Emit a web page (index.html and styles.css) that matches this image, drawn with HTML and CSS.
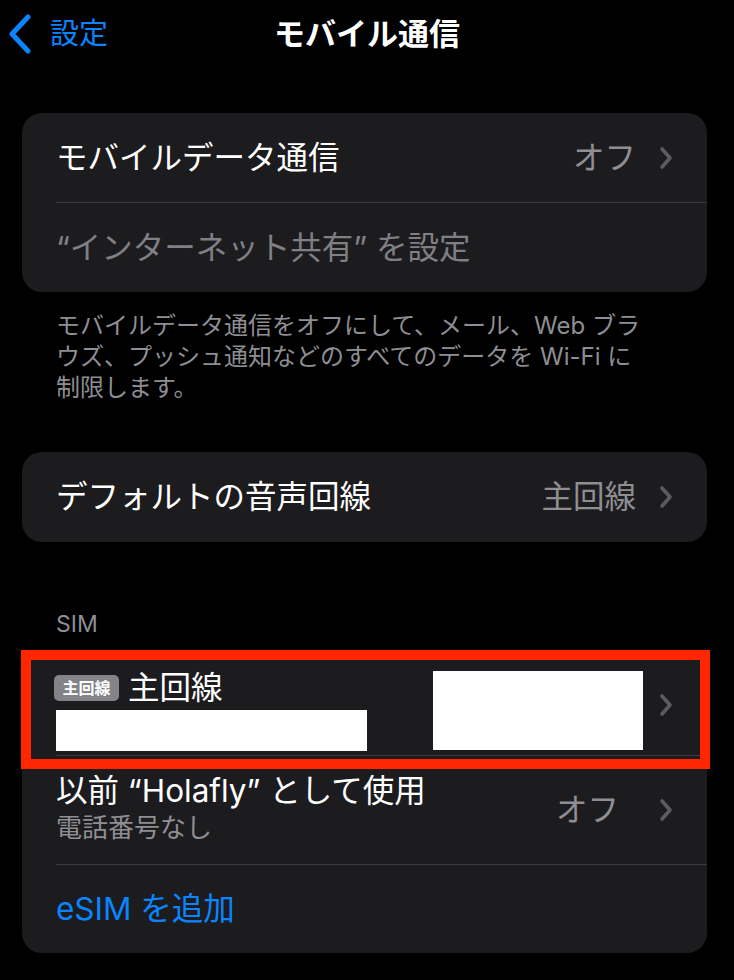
FILE: index.html
```html
<!DOCTYPE html>
<html lang="ja">
<head>
<meta charset="utf-8">
<title>モバイル通信</title>
<link rel="stylesheet" href="styles.css">
</head>
<body>
<header class="nav">
  <a class="nav-back" href="#">
    <svg class="nav-back-icon" viewBox="0 0 24 40" width="24" height="40" aria-hidden="true">
      <path d="M20 3 L4 20 L20 37" fill="none" stroke="currentColor" stroke-width="5" stroke-linecap="round" stroke-linejoin="round"/>
    </svg>
    <span>設定</span>
  </a>
  <h1 class="nav-title">モバイル通信</h1>
  <div></div>
</header>

<main class="content">
  <section class="group group-first">
    <div class="row">
      <span class="row-label">モバイルデータ通信</span>
      <span class="row-value">オフ</span>
      <svg class="chevron" viewBox="0 0 14 24" width="14" height="24" aria-hidden="true"><path d="M3 3 L11 12 L3 21"/></svg>
    </div>
    <div class="row">
      <span class="row-label muted">“インターネット共有” を設定</span>
    </div>
  </section>
  <p class="group-footer">モバイルデータ通信をオフにして、メール、Web ブラ<br>ウズ、プッシュ通知などのすべてのデータを Wi-Fi に<br>制限します。</p>

  <section class="group group-voice">
    <div class="row">
      <span class="row-label">デフォルトの音声回線</span>
      <span class="row-value">主回線</span>
      <svg class="chevron" viewBox="0 0 14 24" width="14" height="24" aria-hidden="true"><path d="M3 3 L11 12 L3 21"/></svg>
    </div>
  </section>

  <h2 class="group-header">SIM</h2>
  <section class="group group-sim">
    <div class="row sim-row">
      <div class="sim-main">
        <div class="sim-title"><span class="badge">主回線</span><span>主回線</span></div>
        <div class="redact redact-number"></div>
      </div>
      <div class="redact redact-carrier"></div>
      <svg class="chevron sim-chevron" viewBox="0 0 14 24" width="14" height="24" aria-hidden="true"><path d="M3 3 L11 12 L3 21"/></svg>
    </div>
    <div class="row row-tall">
      <div class="row-stack">
        <span class="row-label">以前 “Holafly” として使用</span>
        <span class="row-sub">電話番号なし</span>
      </div>
      <span class="row-value value-wide">オフ</span>
      <svg class="chevron" viewBox="0 0 14 24" width="14" height="24" aria-hidden="true"><path d="M3 3 L11 12 L3 21"/></svg>
    </div>
    <div class="row row-action">
      <span class="row-label link">eSIM を追加</span>
    </div>
    <div class="highlight-frame"></div>
  </section>
</main>
</body>
</html>
```

FILE: styles.css
```css
* {
  box-sizing: border-box;
}

html, body {
  margin: 0;
  padding: 0;
  background: #000;
}

body {
  width: 734px;
  min-height: 980px;
  color: #fff;
  font-family: Inter, "Noto Sans CJK JP", sans-serif;
  overflow: hidden;
}

/* Navigation bar */
.nav {
  height: 68px;
  display: grid;
  grid-template-columns: 1fr auto 1fr;
  align-items: center;
}

.nav-back {
  display: flex;
  align-items: center;
  padding-left: 8px;
  color: #0a84ff;
  text-decoration: none;
  font-size: 29px;
  line-height: 40px;
}

.nav-back-icon {
  display: block;
  margin-right: 18px;
}

.nav-title {
  margin: 0;
  font-size: 31px;
  font-weight: 700;
  line-height: 40px;
  letter-spacing: 0;
}

/* Grouped lists */
.content {
  padding: 0 27px 0 22px;
}

.group {
  background: #1c1c1e;
  border-radius: 20px;
  overflow: hidden;
}

.group-first {
  margin-top: 45px;
}

.group-voice {
  margin-top: 49px;
}

.group-sim {
  position: relative;
  margin-top: 11px;
  overflow: visible;
}

.row {
  display: flex;
  align-items: center;
  min-height: 89px;
  margin-left: 34px;
  padding-right: 34px;
  font-size: 31.5px;
  line-height: 40px;
}

.row + .row {
  border-top: 1px solid #3a3a3c;
  min-height: 90px;
}

.group-voice .row {
  min-height: 90px;
}

.row-label {
  flex: 1;
  white-space: nowrap;
}

.muted {
  color: #7f7f84;
}

.link {
  color: #0a84ff;
}

.row-value {
  color: #8e8e93;
  white-space: nowrap;
}

.value-wide {
  margin-right: 17px;
}

.chevron {
  display: block;
  flex: none;
  width: 14px;
  height: 24px;
  margin-left: 23px;
  fill: none;
  stroke: #5b5b60;
  stroke-width: 3.6;
  stroke-linecap: round;
  stroke-linejoin: round;
}

.group-footer {
  margin: 18px 0 0;
  padding: 0 20px 0 34px;
  color: #8e8e93;
  font-size: 24px;
  line-height: 31px;
}

.group-header {
  margin: 67px 0 0;
  padding-left: 34px;
  color: #8e8e93;
  font-size: 23px;
  font-weight: 400;
  line-height: 30px;
}

/* SIM rows */
.row.sim-row {
  align-items: flex-start;
  min-height: 105px;
  padding-top: 20px;
}

.sim-main {
  flex: 1;
}

.sim-title {
  display: flex;
  align-items: center;
  height: 36px;
  line-height: 36px;
}

.badge {
  display: inline-flex;
  align-items: center;
  justify-content: center;
  width: 65px;
  height: 26px;
  margin-left: -2px;
  margin-right: 9px;
  border-radius: 5px;
  background: #838388;
  color: #fff;
  font-size: 16px;
  font-weight: 700;
  line-height: 26px;
}

.redact {
  background: #fff;
}

.redact-number {
  width: 311px;
  height: 41px;
  margin-top: 4px;
}

.redact-carrier {
  width: 210px;
  height: 79px;
  margin-top: 1px;
}

.chevron.sim-chevron {
  margin-top: 23px;
  margin-left: 16px;
}

.row.row-tall {
  min-height: 109px;
}

.row-stack {
  flex: 1;
  display: flex;
  flex-direction: column;
}

.row-stack .row-label {
  line-height: 36px;
}

.row-sub {
  color: #8e8e93;
  font-size: 26px;
  line-height: 38px;
}

.row.row-action {
  min-height: 89px;
}

/* Red annotation frame drawn over the first SIM row */
.highlight-frame {
  position: absolute;
  top: 0;
  left: -1px;
  width: 689px;
  height: 119px;
  border: 10px solid #ff2600;
  pointer-events: none;
}
```
